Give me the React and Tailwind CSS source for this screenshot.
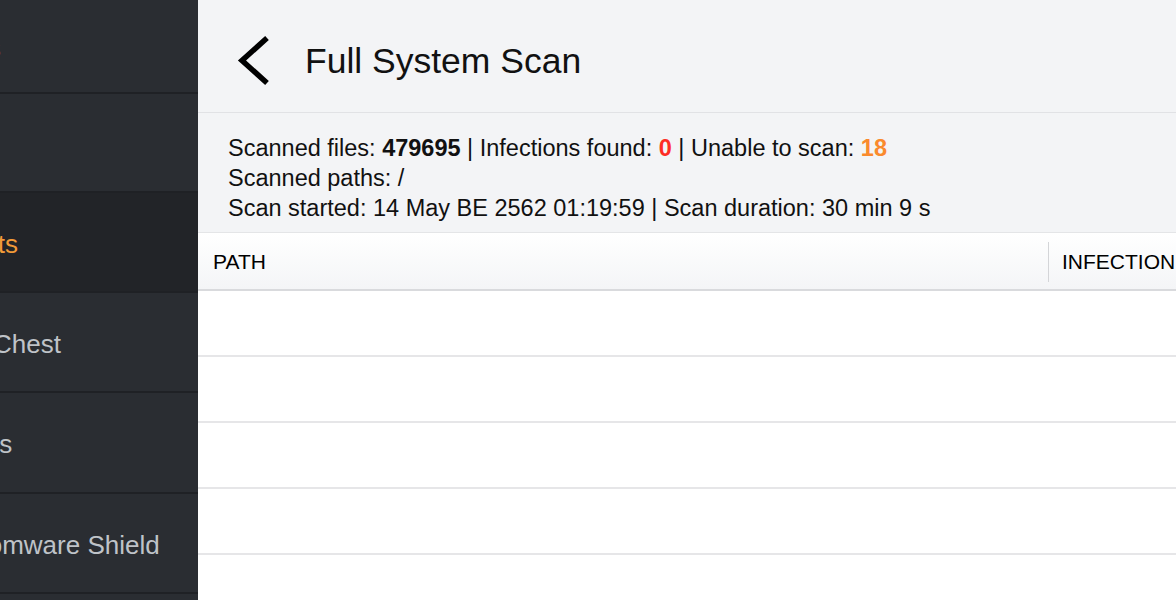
import React from 'react';

const navItems = [
  { label: 'Status', warn: true, h: 'h-[94px]' },
  { label: 'Scan', h: 'h-[99px]' },
  { label: 'Reports', active: true, h: 'h-[100px]' },
  { label: 'Virus Chest', h: 'h-[100px]' },
  { label: 'Shields', h: 'h-[101px]' },
  { label: 'Ransomware Shield', h: 'h-[100px]' },
  { label: 'Wi-Fi Inspector', h: 'h-[100px]' },
];

const Sidebar = () => (
  <div className="w-[198px] shrink-0 h-full bg-[#2a2d32] overflow-hidden">
    {navItems.map((item) => (
      <div
        key={item.label}
        className={`${item.h} flex items-center border-b-2 border-[#1f2125] ${
          item.active ? 'bg-[#222428]' : ''
        }`}
      >
        <span
          className={`ml-[-73px] mt-[3px] whitespace-nowrap text-[26px] leading-none ${
            item.active || item.warn ? 'text-[#f29a38]' : 'text-[#bfc3c8]'
          }`}
        >
          {item.label}
        </span>
      </div>
    ))}
  </div>
);

const rows = [0, 1, 2, 3, 4];

const App = () => {
  return (
    <div
      className="w-[1176px] h-[600px] flex overflow-hidden bg-white text-black"
      style={{ fontFamily: '"Liberation Sans", Arial, sans-serif' }}
    >
      <Sidebar />

      <div className="flex-1 flex flex-col min-w-0">
        {/* header */}
        <div className="h-[113px] shrink-0 flex items-center pl-[38px] pt-[8px] bg-[#f3f4f6] border-b border-[#e1e2e5]">
          <svg width="36" height="52" viewBox="0 0 36 52" fill="none" className="mt-[2px]">
            <path d="M31 3 L6 25.5 L31 48" stroke="#000" strokeWidth="5.5" strokeLinejoin="miter" />
          </svg>
          <h1 className="ml-[33px] mt-[3px] text-[35.5px] leading-none text-[#111]">Full System Scan</h1>
        </div>

        {/* scan info */}
        <div className="shrink-0 bg-[#f3f4f6] pl-[30px] pt-[20px] pb-[9px] border-b border-[#e4e5e7] text-[23.5px] leading-[30px] text-[#111]">
          <div>
            Scanned files: <span className="font-bold">479695</span> | Infections found:{' '}
            <span className="font-bold text-[#fd2d24]">0</span> | Unable to scan:{' '}
            <span className="font-bold text-[#fa8a2d]">18</span>
          </div>
          <div>Scanned paths: /</div>
          <div>Scan started: 14 May BE 2562 01:19:59 | Scan duration: 30 min 9 s</div>
        </div>

        {/* table header */}
        <div className="h-[58px] shrink-0 flex items-center pt-px bg-gradient-to-b from-white to-[#f4f5f7] border-b-2 border-[#d9dadd] text-[21px]">
          <div className="w-[850px] shrink-0 pl-[15px]">PATH</div>
          <div className="h-[40px] w-px bg-[#d4d5d8]" />
          <div className="pl-[13px] whitespace-nowrap">INFECTION</div>
        </div>

        {/* empty rows */}
        {rows.map((r) => (
          <div key={r} className="h-[66px] shrink-0 border-b-2 border-[#e6e6e8] bg-white" />
        ))}
      </div>
    </div>
  );
};

export default App;
